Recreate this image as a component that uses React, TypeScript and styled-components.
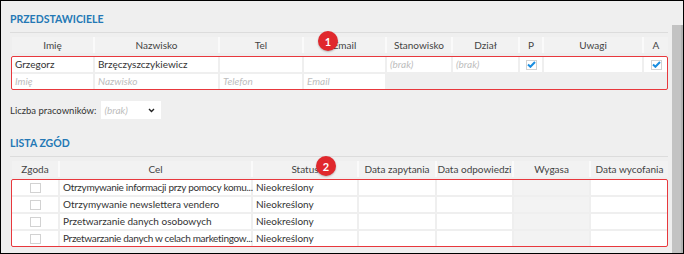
import React from "react";
import styled, { createGlobalStyle } from "styled-components";

const GlobalStyle = createGlobalStyle`
  html, body {
    margin: 0;
    padding: 0;
    background: #ffffff;
  }
  body {
    font-family: Lato, "Open Sans", sans-serif;
    color: #333;
  }
`;

const Frame = styled.div`
  width: 684px;
  height: 254px;
  box-sizing: border-box;
  border: 1px solid #000;
  background: #efefef;
  display: flex;
  overflow: hidden;
`;

const Content = styled.div`
  flex: 1;
  min-width: 0;
  padding: 0 4px 0 9px;
`;

const ScrollTrack = styled.div`
  width: 11px;
  padding-top: 24px;
  box-sizing: border-box;
  display: flex;
`;

const ScrollThumb = styled.div`
  flex: 1;
  background: #c3c3c3;
  border-right: 2px solid #b2b2b2;
`;

const SectionTitle = styled.h2<{ $top: number }>`
  margin: 0;
  padding: ${(p) => p.$top}px 0 6px;
  line-height: 14px;
  font-size: 10.5px;
  font-weight: 700;
  color: #2478b5;
  border-bottom: 1px solid #dcdcdc;
`;

const Table = styled.div`
  position: relative;
  margin: 4px 0 0 2px;
`;

const HeaderRow = styled.div<{ $cols: string }>`
  display: grid;
  grid-template-columns: ${(p) => p.$cols};
  column-gap: 2px;
  height: 16px;
  background: #fafafa;
`;

const HeaderCell = styled.div`
  background: #f2f2f2;
  font-size: 10px;
  line-height: 16px;
  color: #444;
  text-align: center;
  white-space: nowrap;
  overflow: hidden;
`;

const Body = styled.div<{ $top: number }>`
  position: relative;
  margin-top: ${(p) => p.$top}px;
  display: flex;
  flex-direction: column;
  gap: 2px;

  &::after {
    content: "";
    position: absolute;
    inset: -1px 0 -1px -1px;
    border: 1.5px solid #e8383d;
    border-radius: 2px;
    pointer-events: none;
  }
`;

const Row = styled.div<{ $cols: string }>`
  display: grid;
  grid-template-columns: ${(p) => p.$cols};
  column-gap: 2px;
  height: 15px;
`;

const Cell = styled.div<{ $disabled?: boolean; $center?: boolean; $tight?: boolean }>`
  background: ${(p) => (p.$disabled ? "#f3f3f3" : "#ffffff")};
  font-size: 10px;
  line-height: 15px;
  padding: 0 3px;
  color: #333;
  white-space: nowrap;
  letter-spacing: ${(p) => (p.$tight ? "-0.3px" : "0")};
  display: ${(p) => (p.$center ? "flex" : "block")};
  align-items: center;
  justify-content: center;
`;

const Hint = styled.span`
  font-style: italic;
  color: #bdbdbd;
`;

const Box = styled.span`
  width: 11px;
  height: 10px;
  box-sizing: border-box;
  border: 1px solid #d2d2d2;
  background: #fff;
  display: inline-flex;
  align-items: center;
  justify-content: center;
`;

const Badge = styled.div<{ $left: number; $top: number }>`
  position: absolute;
  left: ${(p) => p.$left}px;
  top: ${(p) => p.$top}px;
  width: 20px;
  height: 20px;
  border-radius: 50%;
  background: #e0282d;
  color: #fff;
  font-size: 11px;
  font-weight: 700;
  display: flex;
  align-items: center;
  justify-content: center;
  box-shadow: 0 1px 2px rgba(0, 0, 0, 0.25);
  z-index: 2;
`;

const Field = styled.div`
  display: flex;
  align-items: center;
  gap: 5px;
  margin-top: 12px;
  font-size: 9.5px;
  color: #333;
`;

const Select = styled.div`
  width: 60px;
  height: 18px;
  background: #fff;
  display: flex;
  align-items: center;
  justify-content: space-between;
  padding: 0 6px 0 3px;
  box-sizing: border-box;
  font-size: 10px;
`;

const Check = ({ checked }: { checked?: boolean }) => (
  <Box>
    {checked && (
      <svg width="9" height="7" viewBox="0 0 9 7">
        <path d="M1 3.6 L3.4 5.8 L8 1" stroke="#1b8ee0" strokeWidth="2" fill="none" />
      </svg>
    )}
  </Box>
);

const Chevron = () => (
  <svg width="7" height="5" viewBox="0 0 7 5">
    <path d="M1 1 L3.5 3.5 L6 1" stroke="#222" strokeWidth="1.4" fill="none" />
  </svg>
);

const repCols = "81px 123px 82px 81px 64px 65px 22px 98px 24px";
const repHeaders = ["Imię", "Nazwisko", "Tel", "Email", "Stanowisko", "Dział", "P", "Uwagi", "A"];

const consentCols = "46px 191px 104px 76px 75px 75px 77px";
const consentHeaders = [
  "Zgoda",
  "Cel",
  "Status",
  "Data zapytania",
  "Data odpowiedzi",
  "Wygasa",
  "Data wycofania",
];

const consents = [
  { text: "Otrzymywanie informacji przy pomocy komu...", tight: true },
  { text: "Otrzymywanie newslettera vendero", tight: false },
  { text: "Przetwarzanie danych osobowych", tight: false },
  { text: "Przetwarzanie danych w celach marketingow...", tight: true },
];

export default function App() {
  return (
    <>
      <GlobalStyle />
      <Frame>
        <Content>
          <SectionTitle $top={11}>PRZEDSTAWICIELE</SectionTitle>
          <Table>
            <HeaderRow $cols={repCols}>
              {repHeaders.map((h) => (
                <HeaderCell key={h}>{h}</HeaderCell>
              ))}
            </HeaderRow>
            <Badge $left={306} $top={-6}>1</Badge>
            <Body $top={4}>
              <Row $cols={repCols}>
                <Cell>Grzegorz</Cell>
                <Cell>Brzęczyszczykiewicz</Cell>
                <Cell />
                <Cell />
                <Cell>
                  <Hint>(brak)</Hint>
                </Cell>
                <Cell>
                  <Hint>(brak)</Hint>
                </Cell>
                <Cell $center>
                  <Check checked />
                </Cell>
                <Cell />
                <Cell $center>
                  <Check checked />
                </Cell>
              </Row>
              <Row $cols={repCols}>
                <Cell>
                  <Hint>Imię</Hint>
                </Cell>
                <Cell>
                  <Hint>Nazwisko</Hint>
                </Cell>
                <Cell>
                  <Hint>Telefon</Hint>
                </Cell>
                <Cell>
                  <Hint>Email</Hint>
                </Cell>
              </Row>
            </Body>
          </Table>

          <Field>
            <span>Liczba pracowników:</span>
            <Select>
              <Hint>(brak)</Hint>
              <Chevron />
            </Select>
          </Field>

          <SectionTitle $top={17}>LISTA ZGÓD</SectionTitle>
          <Table>
            <HeaderRow $cols={consentCols}>
              {consentHeaders.map((h) => (
                <HeaderCell key={h}>{h}</HeaderCell>
              ))}
            </HeaderRow>
            <Badge $left={304} $top={-5}>2</Badge>
            <Body $top={3}>
              {consents.map((c) => (
                <Row $cols={consentCols} key={c.text}>
                  <Cell $center>
                    <Check />
                  </Cell>
                  <Cell $tight={c.tight}>{c.text}</Cell>
                  <Cell>Nieokreślony</Cell>
                  <Cell />
                  <Cell />
                  <Cell $disabled />
                  <Cell />
                </Row>
              ))}
            </Body>
          </Table>
        </Content>
        <ScrollTrack>
          <ScrollThumb />
        </ScrollTrack>
      </Frame>
    </>
  );
}
